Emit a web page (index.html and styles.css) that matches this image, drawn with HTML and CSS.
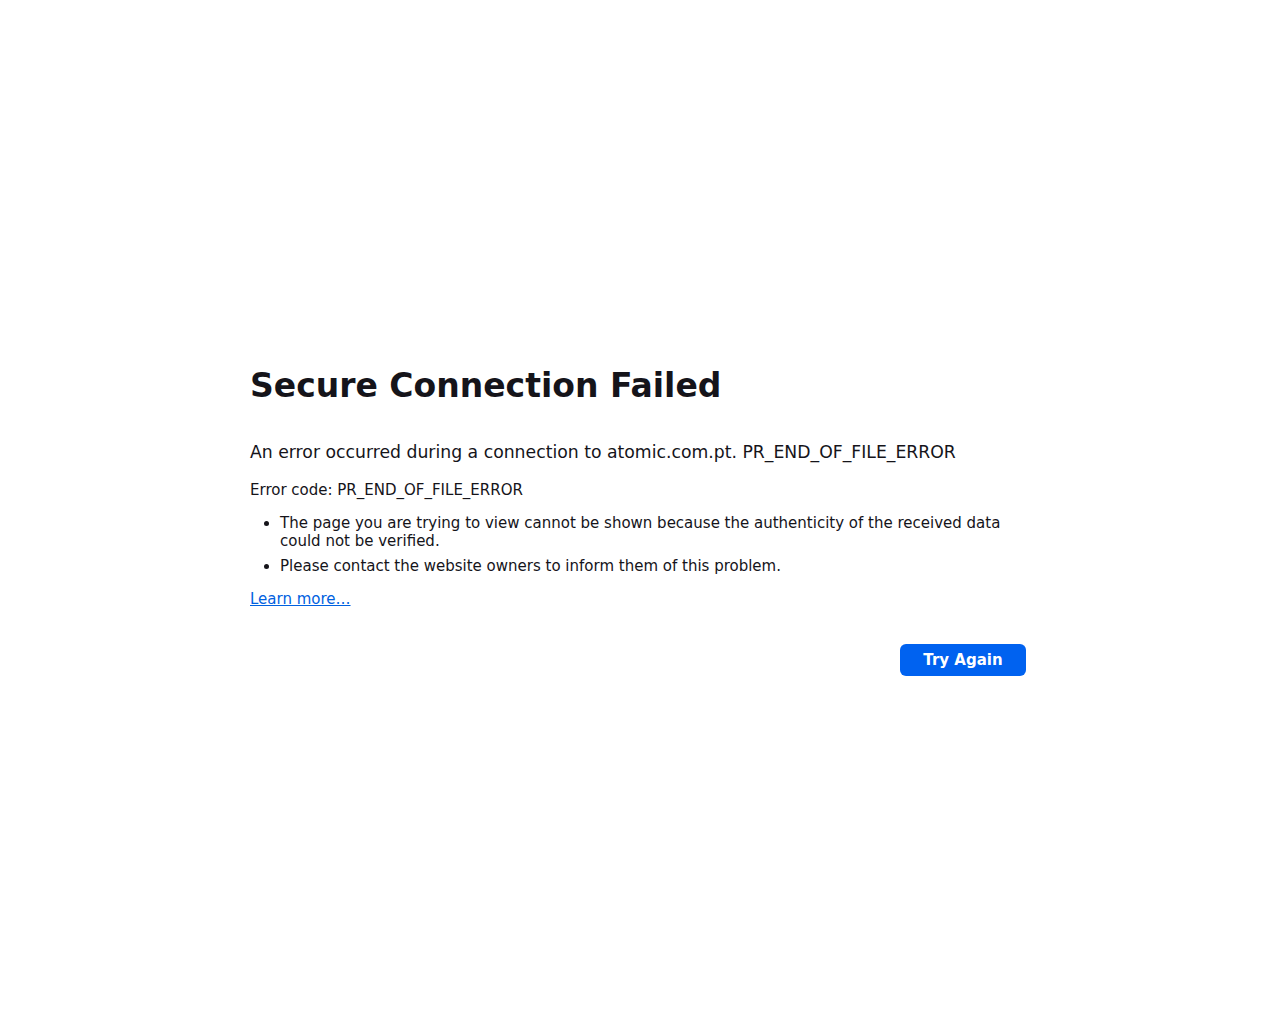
FILE: index.html
```html
<!DOCTYPE html>
<html lang="en">
<head>
    <meta charset="UTF-8">
    <meta name="viewport" content="width=device-width, initial-scale=1.0">
    <title>Problem loading page</title>
    <link rel="stylesheet" href="styles.css">
</head>
<body>
    <div class="container">
        <div class="title">
            <h1 class="title-text">Secure Connection Failed</h1>
        </div>

        <div class="short-desc">
            <p>An error occurred during a connection to atomic.com.pt. PR_END_OF_FILE_ERROR</p>
        </div>

        <div class="error-code">
            <p>Error code: PR_END_OF_FILE_ERROR</p>
        </div>

        <div class="long-desc">
            <ul>
                <li>The page you are trying to view cannot be shown because the authenticity of the received data could not be verified.</li>
                <li>Please contact the website owners to inform them of this problem.</li>
            </ul>
        </div>

        <p class="learn-more"><a href="#">Learn more…</a></p>

        <div class="button-container">
            <button id="tryAgain" class="primary">Try Again</button>
        </div>
    </div>
</body>
</html>
```

FILE: styles.css
```css
* {
    box-sizing: border-box;
    margin: 0;
    padding: 0;
}

html, body {
    height: 100%;
}

body {
    font-family: "DejaVu Sans", sans-serif;
    font-size: 15px;
    color: #15141a;
    background-color: #fff;
    display: flex;
    align-items: center;
    justify-content: center;
}

.container {
    width: 780px;
    margin-top: 18px;
}

.title-text {
    font-size: 33px;
    font-weight: bold;
    line-height: 1.2;
    margin-bottom: 34px;
}

.short-desc p {
    font-size: 17.25px;
    line-height: 1.4;
    margin-bottom: 16px;
}

.error-code p {
    line-height: 1.4;
    margin-bottom: 13px;
}

ul {
    padding-left: 30px;
}

li {
    line-height: 18px;
    margin-bottom: 7px;
    padding-left: 0;
}

.learn-more {
    margin-top: 14px;
    line-height: 1.4;
}

.learn-more a {
    color: #0061e0;
}

.button-container {
    display: flex;
    justify-content: flex-end;
    margin-top: 34px;
    padding-right: 4px;
}

button {
    font-family: inherit;
    font-size: 15px;
    font-weight: bold;
    padding: 0 21px;
    height: 32px;
    min-width: 126px;
    background-color: #0062f0;
    color: #fff;
    border: none;
    border-radius: 6px;
    cursor: pointer;
}

button:hover {
    background-color: #0250bb;
}
```
